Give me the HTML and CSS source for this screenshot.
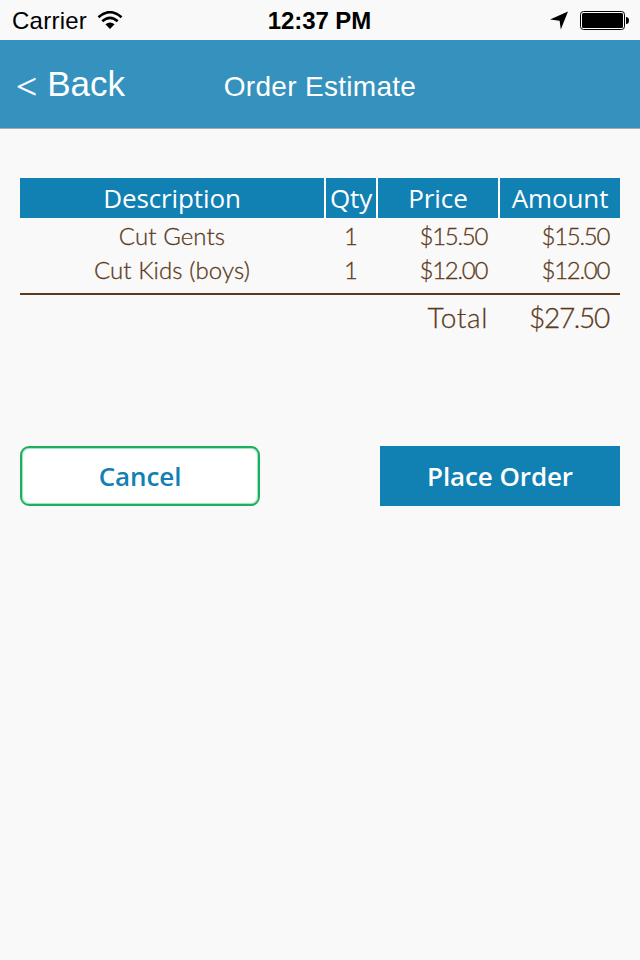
FILE: index.html
```html
<!DOCTYPE html>
<html lang="en">
<head>
<meta charset="utf-8">
<title>Order Estimate</title>
<link rel="stylesheet" href="styles.css">
</head>
<body>
<div class="status">
  <div class="carrier"><span class="carrier-name">Carrier</span>
    <svg class="wifi" width="26" height="20" viewBox="0 0 26 20">
      <path d="M1.500 6.200Q13-3.800 24.500 6.200M5.300 10.200Q13 3.400 20.700 10.200" fill="none" stroke="#000" stroke-width="2.700"/>
      <path d="M8.400 13.300Q13 9.600 17.600 13.300L13 18z"/>
    </svg>
  </div>
  <div class="time">12:37 PM</div>
  <div class="indicators">
    <svg width="20" height="20" viewBox="0 0 20 20"><path d="M19 1.500L11.800 19.500L10.600 10.700L1 9.600z"/></svg>
    <svg class="battery" width="50" height="20" viewBox="0 0 50 20">
      <rect x=".5" y="1.500" width="44" height="18" rx="3" fill="#fff" stroke="#000"/>
      <rect x="2" y="3" width="41" height="15" rx="1.500"/>
      <path d="M46 7q3 0 3 3.500t-3 3.500z"/>
    </svg>
  </div>
</div>
<header class="nav">
  <div class="back"><span class="chevron">&lt;</span><span class="back-label">Back</span></div>
  <h1 class="title">Order Estimate</h1>
</header>
<main>
  <div class="row head">
    <div>Description</div><div>Qty</div><div>Price</div><div>Amount</div>
  </div>
  <div class="items">
    <div class="row item"><div>Cut Gents</div><div class="qty">1</div><div class="money">$15.50</div><div class="money">$15.50</div></div>
    <div class="row item"><div>Cut Kids (boys)</div><div class="qty">1</div><div class="money">$12.00</div><div class="money">$12.00</div></div>
  </div>
  <div class="row total"><div></div><div></div><div class="total-label">Total</div><div class="money">$27.50</div></div>
  <div class="actions">
    <button class="cancel">Cancel</button>
    <button class="place">Place Order</button>
  </div>
</main>
</body>
</html>
```
FILE: styles.css
```css
* { box-sizing: border-box; }
body { margin: 0; height: 960px; overflow: hidden; background: #f9f9f9; font-family: "Liberation Sans", sans-serif; }
svg { display: block; flex: none; }
.status { height: 40px; display: grid; grid-template-columns: 1fr 1fr 1fr; align-items: center; padding: 0 11px 0 12px; color: #000; }
.carrier { display: flex; align-items: center; gap: 10px; font-size: 24px; letter-spacing: .25px; padding-top: 1px; }
.time { padding: 2px 2px 0 0; text-align: center; font-size: 24px; font-weight: 700; letter-spacing: -.1px; }
.indicators { display: flex; justify-content: flex-end; gap: 11px; margin-right: -1px; }
.nav { height: 88px; display: grid; grid-template-columns: 1fr 2fr 1fr; background: #3592be; color: #fff; box-shadow: 0 1px 0 #a9abad; }
.back { padding: 24px 0 0 16px; display: flex; gap: 10px; white-space: nowrap; line-height: 40px; }
.chevron { padding-top: 2px; font: 300 37px/40px "Open Sans", sans-serif; -webkit-text-stroke: .5px #fff; }
.back-label { font-size: 35px; }
.title { margin: 0; padding-top: 27px; text-align: center; font-size: 28px; line-height: 40px; font-weight: 400; letter-spacing: .3px; }
main { padding: 50px 20px 0; }
.row { display: grid; grid-template-columns: 304px 50px 120px 120px; column-gap: 2px; text-align: center; white-space: nowrap; }
.head { height: 40px; background: #fff; font: 26px/40px "Open Sans", sans-serif; letter-spacing: -.1px; color: #fff; }
.head div { background: #1180b3; }
.items { padding-top: 1px; height: 77px; border-bottom: 2px solid #5c3a20; }
.item, .total { color: #5c3a20; -webkit-text-stroke: .3px #5c3a20; }
.item { height: 34px; font: 300 24px/34px Lato, sans-serif; letter-spacing: .1px; }
.money { padding-right: 11px; text-align: right; letter-spacing: -1.300px; }
.total { height: 151px; font: 300 28px/44px Lato, sans-serif; }
.total-label { padding-right: 10px; text-align: right; letter-spacing: .6px; }
.actions { display: flex; justify-content: space-between; }
button { width: 240px; height: 60px; padding: 0; font: 600 26px/60px "Open Sans", sans-serif; letter-spacing: -.1px; }
.cancel { border: 2px solid #1caf60; border-radius: 9px; background: #fff; color: #1180b3; line-height: 56px; box-shadow: inset 0 0 1px 1px #a1dfbd; }
.place { border: 0; background: #1180b3; color: #fff; }
```
